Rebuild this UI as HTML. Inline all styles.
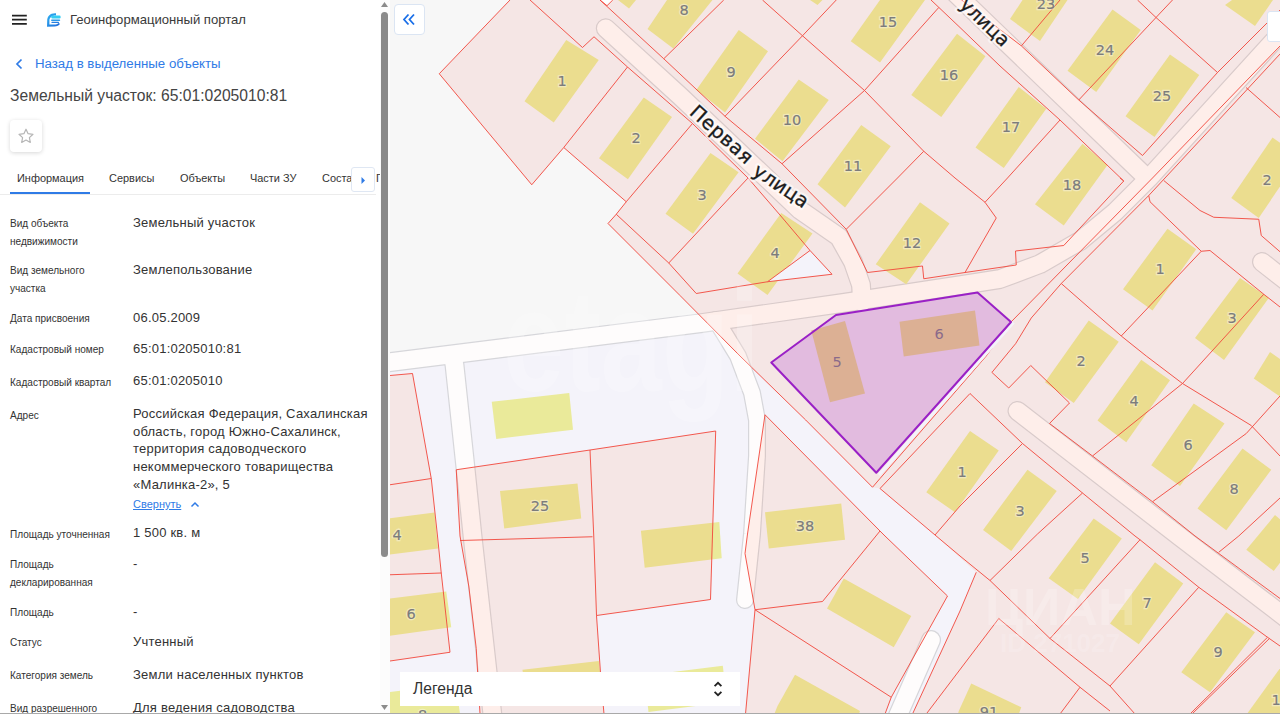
<!DOCTYPE html>
<html lang="ru"><head><meta charset="utf-8"><title>Геоинформационный портал</title>
<style>
*{box-sizing:border-box;margin:0;padding:0}
html,body{width:1280px;height:714px;overflow:hidden;background:#fff;font-family:"Liberation Sans",sans-serif;color:#333}
#panel{position:absolute;left:0;top:0;width:380px;height:714px;background:#fff;overflow:hidden}
.abs{position:absolute;white-space:nowrap}
#title{left:70px;top:12px;font-size:13.1px;line-height:16px;color:#3a3a3a}
#back{left:35px;top:56px;font-size:13.26px;line-height:16px;color:#2f7be6}
#h1{left:10px;top:87px;font-size:15.65px;line-height:18px;color:#444}
#star{left:10px;top:120px;width:32px;height:32px;border-radius:4px;background:#fff;box-shadow:0 1px 4px rgba(0,0,0,.16)}
.tab{top:171px;font-size:10.95px;line-height:14px;color:#333}
#tabline{left:0;top:194px;width:376px;height:1px;background:#ececec}
#tabsel{left:10px;top:192px;width:80px;height:2.2px;background:#2f7be6}
#tabbtn{left:351px;top:167px;width:24px;height:25px;background:#fff;border:1px solid #dfe7f3;border-radius:3px}
.l{left:10px;font-size:10.05px;line-height:17.6px;color:#333;white-space:normal;width:115px}
.v{left:133px;font-size:13px;line-height:17.7px;color:#333;white-space:normal;width:244px;letter-spacing:.22px}
#sb{position:absolute;left:380px;top:0;width:10px;height:714px;background:#fcfcfc}
#sbt{position:absolute;left:1px;top:12px;width:7px;height:545px;background:#8b8b8b;border-radius:3.5px}
#map{position:absolute;left:390px;top:0;width:890px;height:714px;overflow:hidden;background:#f6f6f6}
#map svg{position:absolute;left:-390px;top:0}
#collapse{position:absolute;left:394px;top:4px;width:31px;height:31px;background:#fff;border:1px solid #dbe5f3;border-radius:4px}
#legend{position:absolute;left:400px;top:672px;width:340px;height:34px;background:#fff;font-size:15.6px;line-height:34px;padding-left:13px;color:#333}
#corner{position:absolute;left:1267px;top:11px;width:20px;height:31px;background:#fff;border-radius:3px;border:1px solid #dbe5f3}
#bot{position:absolute;left:0;top:712.7px;width:1280px;height:1.3px;background:#a9a9a9}
</style></head><body>
<div id="map"><svg width="1280" height="714" viewBox="0 0 1280 714">
<defs><g id="cov"><polygon points="510,0 439.25,73.75 531.75,184.75 563.75,147.5 626.25,201.75 608,223.5 680,295.5 740,356 805.7,420 872.5,487.25 880,488.5 935,535 976.25,572.25 960,611 912.5,714 1280,714 1280,0"/><polygon points="765,414.75 880,531 885,536 947.5,596 891.25,697.25 885,714 745.5,714 755,609.75 745,553.5 747.5,534"/><polygon points="456.25,469.75 590,450 715.7,431 710.5,599.5 596.5,615.5 601,680 604,714 480,714 476.25,648.5 468.75,586 460,536"/><polygon points="390,375.5 412.5,373.5 431.25,478.5 437.5,536 441.25,573 450,652.25 390,661"/></g></defs>
<rect x="380" y="0" width="900" height="714" fill="#f4f3fa"/>
<polygon points="380,0 640,0 640,230 720,321 380,367" fill="#f7f7f7"/>
<use href="#cov" fill="#f5f3f7"/>
<polyline points="370,364.7 700,323.3 843,303 968,284 1000,279 1040,264 1080,241 1115,212 1149,178 1290,23" fill="none" stroke="#d6d6da" stroke-width="20" stroke-linecap="round" stroke-linejoin="round"/>
<polyline points="605.8,28.3 680,96 760,172 800,210 839,237 853,262 861,285 862,302" fill="none" stroke="#d6d6da" stroke-width="20" stroke-linecap="round" stroke-linejoin="round"/>
<polyline points="950,-12 1147,178" fill="none" stroke="#d6d6da" stroke-width="20" stroke-linecap="round" stroke-linejoin="round"/>
<polyline points="453,358 454.5,365 465.5,468 472.5,536 487.5,671 493,720" fill="none" stroke="#d6d6da" stroke-width="20" stroke-linecap="round" stroke-linejoin="round"/>
<polyline points="716,320 738,356 752,393 757,420 757,456 752,534 745,600" fill="none" stroke="#d6d6da" stroke-width="18" stroke-linecap="round" stroke-linejoin="round"/>
<polyline points="1017.5,411 1179,536 1290,621" fill="none" stroke="#d6d6da" stroke-width="20" stroke-linecap="round" stroke-linejoin="round"/>
<polyline points="1262,262 1290,284" fill="none" stroke="#d6d6da" stroke-width="20" stroke-linecap="round" stroke-linejoin="round"/>
<polyline points="931,640 896,720" fill="none" stroke="#d6d6da" stroke-width="20" stroke-linecap="round" stroke-linejoin="round"/>
<polyline points="370,364.7 700,323.3 843,303 968,284 1000,279 1040,264 1080,241 1115,212 1149,178 1290,23" fill="none" stroke="#fefcfc" stroke-width="17.6" stroke-linecap="round" stroke-linejoin="round"/>
<polyline points="605.8,28.3 680,96 760,172 800,210 839,237 853,262 861,285 862,302" fill="none" stroke="#fefcfc" stroke-width="17.6" stroke-linecap="round" stroke-linejoin="round"/>
<polyline points="950,-12 1147,178" fill="none" stroke="#fefcfc" stroke-width="17.6" stroke-linecap="round" stroke-linejoin="round"/>
<polyline points="453,358 454.5,365 465.5,468 472.5,536 487.5,671 493,720" fill="none" stroke="#fefcfc" stroke-width="17.6" stroke-linecap="round" stroke-linejoin="round"/>
<polyline points="716,320 738,356 752,393 757,420 757,456 752,534 745,600" fill="none" stroke="#fefcfc" stroke-width="15.6" stroke-linecap="round" stroke-linejoin="round"/>
<polyline points="1017.5,411 1179,536 1290,621" fill="none" stroke="#fefcfc" stroke-width="17.6" stroke-linecap="round" stroke-linejoin="round"/>
<polyline points="1262,262 1290,284" fill="none" stroke="#fefcfc" stroke-width="17.6" stroke-linecap="round" stroke-linejoin="round"/>
<polyline points="931,640 896,720" fill="none" stroke="#fefcfc" stroke-width="17.6" stroke-linecap="round" stroke-linejoin="round"/>
<g fill="#eaea9a"><polygon points="566.25,40 598.75,60 553.75,122.5 524.5,101.25"/><polygon points="643.75,97.5 672,117 627.9,179.3 599,158.2"/><polygon points="710.5,153 738.6,172.3 693,233.8 665.5,213.8"/><polygon points="781.25,213 812.5,233.5 767.5,295 737.5,273.5"/><polygon points="667,0 712.5,0 673.3,48.5 647.5,29"/><polygon points="618,0 636,0 629,8.5"/><polygon points="810,0 822.5,0 817.5,5"/><polygon points="738.75,30 768,51.25 725,112.5 696.25,90"/><polygon points="798.75,79.5 828.75,100 782.5,161.25 755,138.75"/><polygon points="861.25,125 890.75,146.25 845,207.5 817.5,184.25"/><polygon points="920,202.25 949.5,223.5 906.25,284.25 875.75,264.25"/><polygon points="880,0 925,0 880,62.5 850.75,41.25"/><polygon points="957,33.75 985.5,56.25 941.25,117 911.25,95"/><polygon points="1018.75,87 1046.25,108.75 1003.75,168 975.5,147.5"/><polygon points="1082.5,143.75 1107.5,165 1063.75,225.5 1035,204.25"/><polygon points="1022.5,0 1067.5,0 1040,41 1010,19"/><polygon points="1112.5,9.5 1140.75,30 1096.25,92 1067.5,70.75"/><polygon points="1170,54.5 1199.25,75 1154.5,137 1125.5,116.25"/><polygon points="1225,5 1232,0 1273,0 1255,26"/><polygon points="1167.5,228.75 1196.25,249.25 1152.5,310.5 1123,289.25"/><polygon points="1272.5,137.5 1300,157 1258.75,218 1231.25,198"/><polygon points="1240,278 1268.75,298 1224,360 1195,338"/><polygon points="1088.75,320.5 1118.75,341.75 1073.75,403 1045,382.25"/><polygon points="1141.25,359.75 1170,380.25 1126.25,442.25 1097.5,420.5"/><polygon points="1193.75,403.5 1224.5,423.5 1180,486 1151.25,465.25"/><polygon points="1242.5,448.5 1271.25,469.75 1226.25,530.25 1197.5,508.5"/><polygon points="1270,352 1300,373 1282,398 1253.75,378.5"/><polygon points="1246.25,549.75 1273.75,571 1300,536 1275,515"/><polygon points="1283,664 1310,684 1270,740 1244,718"/><polygon points="970,431 998.75,450.5 955,512.25 926.25,492.25"/><polygon points="1027.5,469.75 1056.75,491 1011.25,551 983,530"/><polygon points="1093.7,518.5 1121.8,538.5 1077.9,599 1048.7,578.3"/><polygon points="1155,562.25 1183.25,583.5 1138.75,644.25 1110,623.5"/><polygon points="1226.25,612.25 1255,632.25 1210,692.25 1181.25,672.25"/><polygon points="971.25,683.5 1021.25,707.25 1015,725 955,725 958.75,711"/><polygon points="843.75,578.5 911.25,616 893.75,647.25 827,608.5"/><polygon points="795,674.75 860,711 855,725 770,725 777.5,706"/><polygon points="765,512.25 841.25,503.5 845,539.75 768.75,548.5"/><polygon points="491.75,401.75 569.25,393 573,429.75 496.25,439"/><polygon points="500,491 577.5,483.5 581.25,518.5 504.25,528.5"/><polygon points="640.9,530.8 719.3,522 721.7,558.2 644.7,567.7"/><polygon points="385,519 434.5,512.5 438,548.4 385,555"/><polygon points="385,599 446.25,591.5 451.25,627.25 385,636.5"/><polygon points="385,692.5 456,684 460,714 385,714"/><polygon points="522.5,669.75 598.75,661 603,697 527,706"/><polygon points="644.5,675.5 722.8,665.7 727,702 648.5,712"/></g>
<use href="#cov" fill="#ff4a1c" fill-opacity="0.08"/>
<polygon points="600,0 607,5.7 612.8,0" fill="#fff"/>
<polygon points="810,250.5 832,274.25 767.5,281.75" fill="#f4f3fa"/>
<g fill="none" stroke="#f2473c" stroke-width="1" stroke-opacity=".9"><polyline points="510,0 439.25,73.75 531.75,184.75 563.75,147.5 627.5,67"/><polyline points="530,0 582.5,47.5 594,36.75 627.5,67 692.5,123.5 748,178 780,215 810,250.5 832,274.25"/><polyline points="563.75,147.5 626.25,201.75 692.5,123.5"/><polyline points="626.25,201.75 616.25,214.25 668.75,263 748,178"/><polyline points="616.25,214.25 608,223.5 680,295.5 740,356 805.7,420 872.5,487.25 880,478.5"/><polyline points="668.75,263 696.25,293.5 767.5,281.75 832,274.25"/><polyline points="767.5,281.75 810,250.5"/><polyline points="600,0 607,5.7 612.8,0"/><polyline points="600,0 663.75,58.75 725,116.25 782,163.75 846.25,229.25 867.5,272.5 922.5,266 923.75,278.75 965,272.5 1016.25,265 1015.5,251 1063.75,245.5 1123.75,181 1120,178"/><polyline points="663.75,58.75 700,23.3 723.75,0"/><polyline points="725,116.25 802.5,35.75 836.25,0"/><polyline points="782,163.75 864.5,90.5 938.75,7.5"/><polyline points="846.25,229.25 897.5,178 923.75,151.25"/><polyline points="762.5,0 802.5,35.75 864.5,90.5 923.75,151.25 955,178 985,202.25 996.25,218 965,272.5"/><polyline points="985,202.25 1007.5,178 1060,120"/><polyline points="931,0 960,27.5 1000,66 1060,120 1123.75,181"/><polyline points="961.5,0 1021.4,45.9 1078.75,100 1142.5,155.5"/><polyline points="1021.4,45.9 1060,0"/><polyline points="1078.75,100 1156,17.5 1172.5,0"/><polyline points="1142.5,155.5 1217.5,72.5 1266,24 1280,10"/><polyline points="1137.5,0 1156,17.5 1217.5,72.5"/><polyline points="1280,46 1152.5,178 1011.25,321.75 986.25,356 880,478.5"/><polyline points="1280,54 1165,178 1148.75,195.5 1061.25,283.5 1031.25,318 1015.6,343.7 992,372.3"/><polyline points="970,393.5 880,488.5"/><polyline points="1148.75,195.5 1150,201.75 1201.25,251.25 1121.25,336 1061.25,283.5"/><polyline points="1163.75,180.5 1200,210.5 1213.75,217.25 1258.75,219.25 1261.25,235.5 1280,251.75"/><polyline points="1201.25,251.25 1210,250.5 1263.75,294.25 1280,307"/><polyline points="1263.75,294.25 1207.5,356 1182.5,383.5"/><polyline points="1121.25,336 1146.25,356 1182.5,383.5 1251.25,425.5 1280,456"/><polyline points="1246,87.5 1280,117.5"/><polyline points="991.75,372.25 1008.75,388 1030.75,365.5 1069.5,403 1049.5,423.5 1092.5,456 1152.5,501.75 1195,536 1280,598.5"/><polyline points="1092.5,456 1182.5,383.5"/><polyline points="1152.5,501.75 1246.25,433.5 1280,396"/><polyline points="970,393.5 1022.5,443.5 1082.5,493 1135,536 1140,539.75 1198.75,587.25 1267.5,637.25 1280,646"/><polyline points="1022.5,443.5 960,506 935,535"/><polyline points="1082.5,493 1037.5,534 990,580.5"/><polyline points="1140,539.75 1050,638.5"/><polyline points="1198.75,587.25 1110,686"/><polyline points="1267.5,637.25 1190,714"/><polyline points="1269.3,638.6 1192,714"/><polyline points="880,488.5 935,535 960,556 990,580.5 1050,638.5 1110,686 1135,714"/><polyline points="1218.75,552.25 1238.75,536 1280,498"/><polyline points="998.75,618.5 1080,687.25 1110,711"/><polyline points="998.75,618.5 926.25,714"/><polyline points="1080,687.25 1060,714"/><polyline points="976.25,572.25 960,611 912.5,714"/><polyline points="765,414.75 880,531 885,536 947.5,596 891.25,697.25 885,714"/><polyline points="765,414.75 747.5,534 745,553.5 755,609.75 745.5,714"/><polyline points="755,609.75 822.5,601.5 880,531"/><polyline points="755,609.75 891.25,697.25"/><polyline points="456.25,469.75 590,450 715.7,431 710.5,599.5 596.5,615.5"/><polyline points="456.25,469.75 460,536 468.75,586 476.25,648.5 480,714"/><polyline points="590,450 593.75,536 596.5,615.5 601,680 604,714"/><polyline points="460,540.5 592.5,536.75"/><polyline points="390,375.5 412.5,373.5 431.25,478.5 437.5,536 441.25,573 450,652.25 390,661"/><polyline points="390,484.75 431.25,478.5"/><polyline points="390,574.75 441.25,573"/></g>
<polyline points="1013.5,322.5 879,475" stroke="#f4f3fa" stroke-width="3" fill="none"/>
<polygon points="771.25,362.5 836,315 977.5,292.5 1011,322 876.25,472.75" fill="#e2bbdf"/>
<polygon points="811.25,330.5 845,321 865,393.5 830,402.25" fill="#dcb094"/>
<polygon points="899.5,321.75 975,310.5 979.5,345.5 903.75,356.5" fill="#dcb094"/>
<polygon points="771.25,362.5 836,315 977.5,292.5 1011,322 876.25,472.75" fill="none" stroke="#9a20c6" stroke-width="2" stroke-linejoin="round"/>
<g font-family="DejaVu Sans, sans-serif" font-size="14.5" fill="none" text-anchor="middle" stroke="#ffffff" stroke-opacity=".4" stroke-width="2.4">
<text x="562" y="86.3">1</text>
<text x="636" y="143.3">2</text>
<text x="702" y="200.3">3</text>
<text x="775" y="258.3">4</text>
<text x="684" y="15.3">8</text>
<text x="731" y="77.3">9</text>
<text x="792" y="125.3">10</text>
<text x="853" y="171.3">11</text>
<text x="912" y="248.3">12</text>
<text x="888" y="27.3">15</text>
<text x="949" y="80.3">16</text>
<text x="1011" y="132.3">17</text>
<text x="1072" y="190.3">18</text>
<text x="1046" y="9.3">23</text>
<text x="1105" y="55.3">24</text>
<text x="1162" y="101.3">25</text>
<text x="1160" y="274.3">1</text>
<text x="1267" y="185.3">2</text>
<text x="1232" y="323.3">3</text>
<text x="1081" y="366.3">2</text>
<text x="1134" y="406.3">4</text>
<text x="1188" y="450.3">6</text>
<text x="1234" y="494.3">8</text>
<text x="962" y="477.3">1</text>
<text x="1020" y="516.3">3</text>
<text x="1085" y="563.3">5</text>
<text x="1147" y="608.3">7</text>
<text x="1218" y="657.3">9</text>
<text x="989" y="717.3">91</text>
<text x="1276" y="704.8">1</text>
<text x="805" y="531.3">38</text>
<text x="540" y="511.3">25</text>
<text x="397" y="540.3">4</text>
<text x="411" y="619.3">6</text>
<text x="422.5" y="719.8">8</text>
</g>
<g font-family="DejaVu Sans, sans-serif" font-size="14.5" fill="#7c7c7c" text-anchor="middle" stroke="#7c7c7c" stroke-width=".2">
<text x="562" y="86.3">1</text>
<text x="636" y="143.3">2</text>
<text x="702" y="200.3">3</text>
<text x="775" y="258.3">4</text>
<text x="684" y="15.3">8</text>
<text x="731" y="77.3">9</text>
<text x="792" y="125.3">10</text>
<text x="853" y="171.3">11</text>
<text x="912" y="248.3">12</text>
<text x="888" y="27.3">15</text>
<text x="949" y="80.3">16</text>
<text x="1011" y="132.3">17</text>
<text x="1072" y="190.3">18</text>
<text x="1046" y="9.3">23</text>
<text x="1105" y="55.3">24</text>
<text x="1162" y="101.3">25</text>
<text x="1160" y="274.3">1</text>
<text x="1267" y="185.3">2</text>
<text x="1232" y="323.3">3</text>
<text x="1081" y="366.3">2</text>
<text x="1134" y="406.3">4</text>
<text x="1188" y="450.3">6</text>
<text x="1234" y="494.3">8</text>
<text x="962" y="477.3">1</text>
<text x="1020" y="516.3">3</text>
<text x="1085" y="563.3">5</text>
<text x="1147" y="608.3">7</text>
<text x="1218" y="657.3">9</text>
<text x="989" y="717.3">91</text>
<text x="1276" y="704.8">1</text>
<text x="805" y="531.3">38</text>
<text x="540" y="511.3">25</text>
<text x="397" y="540.3">4</text>
<text x="411" y="619.3">6</text>
<text x="422.5" y="719.8">8</text>
<text x="837" y="367.3" fill="#8a6a8a" stroke="none">5</text><text x="939" y="339.3" fill="#8a6a8a" stroke="none">6</text>
</g>
<path id="st2" d="M963 1.5 L1018 54" fill="none"/>
<g font-family="DejaVu Sans, sans-serif" font-size="19.5" fill="none" stroke="#fff" stroke-opacity=".55" stroke-width="5" stroke-linejoin="round"><text transform="translate(688.6 113.7) rotate(42)" letter-spacing=".5">Первая</text><text transform="translate(751.6 174) rotate(34)" letter-spacing=".05">улица</text><text dy="6.3" font-size="19"><textPath href="#st2">улица</textPath></text></g>
<g font-family="DejaVu Sans, sans-serif" font-size="19.5" fill="#1c1c1c" stroke="#1c1c1c" stroke-width=".3"><text transform="translate(688.6 113.7) rotate(42)" letter-spacing=".5">Первая</text><text transform="translate(751.6 174) rotate(34)" letter-spacing=".05">улица</text><text dy="6.3" font-size="19"><textPath href="#st2">улица</textPath></text></g>
<g fill="#fff" font-family="Liberation Sans, sans-serif" font-weight="bold"><text transform="translate(503 391) scale(1 1.32)" font-size="110" fill-opacity=".22">etagi</text><text x="985" y="625" font-size="52" fill-opacity=".2">ЦИАН</text><text x="1000" y="652" font-size="26" fill-opacity=".16">ID 271027</text></g>
</svg></div>
<div id="collapse"><svg width="29" height="29" viewBox="0 0 29 29"><path d="M13.5 9.5 L9 14.5 L13.5 19.5 M19 9.5 L14.5 14.5 L19 19.5" fill="none" stroke="#1a6fe8" stroke-width="1.8"/></svg></div>
<div id="corner"></div>
<div id="legend">Легенда<svg class="abs" style="left:311px;top:7px" width="14" height="20" viewBox="0 0 14 20"><path d="M3.6 7.2 L7 3.8 L10.4 7.2 M3.6 12.8 L7 16.2 L10.4 12.8" fill="none" stroke="#222" stroke-width="1.8"/></svg></div>
<div id="panel">
<svg class="abs" style="left:12px;top:14px" width="16" height="12" viewBox="0 0 16 12"><path d="M0 1.6h14.8M0 5.7h14.8M0 9.8h14.8" stroke="#222" stroke-width="1.7"/></svg>
<svg class="abs" style="left:46px;top:11px" width="18" height="18" viewBox="0 0 18 18"><defs><linearGradient id="lg" x1="0" y1="0" x2="1" y2="1"><stop offset="0" stop-color="#2fb4f2"/><stop offset="1" stop-color="#1f66d8"/></linearGradient></defs><path d="M10 2.2C4 1.8 1.2 5.5 1.2 9.5L1 15.8L8.5 15.6C11 15.6 13 14.5 14 12.8L12.5 12C11.5 13.2 10 13.6 8.5 13.6L3.4 13.6L3.4 9.5C3.4 6.5 6 4.2 10 4.4Z" fill="url(#lg)"/><rect x="5.3" y="4.6" width="9.3" height="2.9" rx="1.2" fill="#36cdf3"/><rect x="5" y="8.4" width="9.2" height="1.7" rx=".8" fill="#2b98e8"/><rect x="5.4" y="10.8" width="7.6" height="1.3" rx=".6" fill="#2580e0"/></svg>
<div class="abs" id="title">Геоинформационный портал</div>
<svg class="abs" style="left:15px;top:58px" width="8" height="12" viewBox="0 0 8 12"><path d="M6.5 1.5 L2 6 L6.5 10.5" fill="none" stroke="#2f7be6" stroke-width="1.7"/></svg>
<div class="abs" id="back">Назад в выделенные объекты</div>
<div class="abs" id="h1">Земельный участок: 65:01:0205010:81</div>
<div class="abs" id="star"><svg width="32" height="32" viewBox="0 0 32 32"><path d="M16 9.2l2.1 4.5 4.9.6-3.6 3.3.9 4.8-4.3-2.4-4.3 2.4.9-4.8-3.6-3.3 4.9-.6z" fill="none" stroke="#b5b5b5" stroke-width="1.2" stroke-linejoin="round"/></svg></div>
<div class="abs tab" style="left:17px">Информация</div>
<div class="abs tab" style="left:109px">Сервисы</div>
<div class="abs tab" style="left:180px">Объекты</div>
<div class="abs tab" style="left:250px">Части ЗУ</div>
<div class="abs tab" style="left:322px">Состав</div>
<div class="abs" id="tabline"></div><div class="abs" id="tabsel"></div>
<div class="abs" id="tabbtn"><svg width="22" height="23" viewBox="0 0 22 23"><path d="M9.5 9 L13 12.5 L9.5 16z" fill="#2f7be6"/></svg></div>
<div class="abs" style="left:376px;top:171px;font-size:10.95px;line-height:14px;color:#333">Г</div>

<div class="abs l" style="top:215px">Вид объекта недвижимости</div><div class="abs v" style="top:214px">Земельный участок</div>
<div class="abs l" style="top:262px">Вид земельного<br>участка</div><div class="abs v" style="top:261px">Землепользование</div>
<div class="abs l" style="top:310px">Дата присвоения</div><div class="abs v" style="top:309px">06.05.2009</div>
<div class="abs l" style="top:341px">Кадастровый номер</div><div class="abs v" style="top:340px">65:01:0205010:81</div>
<div class="abs l" style="top:374px">Кадастровый квартал</div><div class="abs v" style="top:372px">65:01:0205010</div>
<div class="abs l" style="top:407px">Адрес</div><div class="abs v" style="top:405px">Российская Федерация, Сахалинская область, город Южно-Сахалинск, территория садоводческого некоммерческого товарищества «Малинка-2», 5</div>
<div class="abs" style="left:133px;top:497px;font-size:11px;line-height:15px;color:#2f7be6;text-decoration:underline">Свернуть</div>
<svg class="abs" style="left:190px;top:501px" width="10" height="7" viewBox="0 0 10 7"><path d="M1.5 5.5 L5 2 L8.5 5.5" fill="none" stroke="#2f7be6" stroke-width="1.5"/></svg>
<div class="abs l" style="top:526px">Площадь уточненная</div><div class="abs v" style="top:524px">1 500 кв. м</div>
<div class="abs l" style="top:556px">Площадь декларированная</div><div class="abs v" style="top:555px">-</div>
<div class="abs l" style="top:604px">Площадь</div><div class="abs v" style="top:603px">-</div>
<div class="abs l" style="top:634px">Статус</div><div class="abs v" style="top:633px">Учтенный</div>
<div class="abs l" style="top:667px">Категория земель</div><div class="abs v" style="top:666px">Земли населенных пунктов</div>
<div class="abs l" style="top:700px">Вид разрешенного</div><div class="abs v" style="top:699px">Для ведения садоводства</div>
</div>
<div id="sb"><div id="sbt"></div>
<svg class="abs" style="left:1px;top:2px" width="8" height="6"><path d="M0 5 L3.5 0 L7 5z" fill="#8b8b8b"/></svg>
<svg class="abs" style="left:1px;top:705px" width="8" height="6"><path d="M0 0 L3.5 5 L7 0z" fill="#8b8b8b"/></svg>
</div>
<div id="bot"></div>
</body></html>
